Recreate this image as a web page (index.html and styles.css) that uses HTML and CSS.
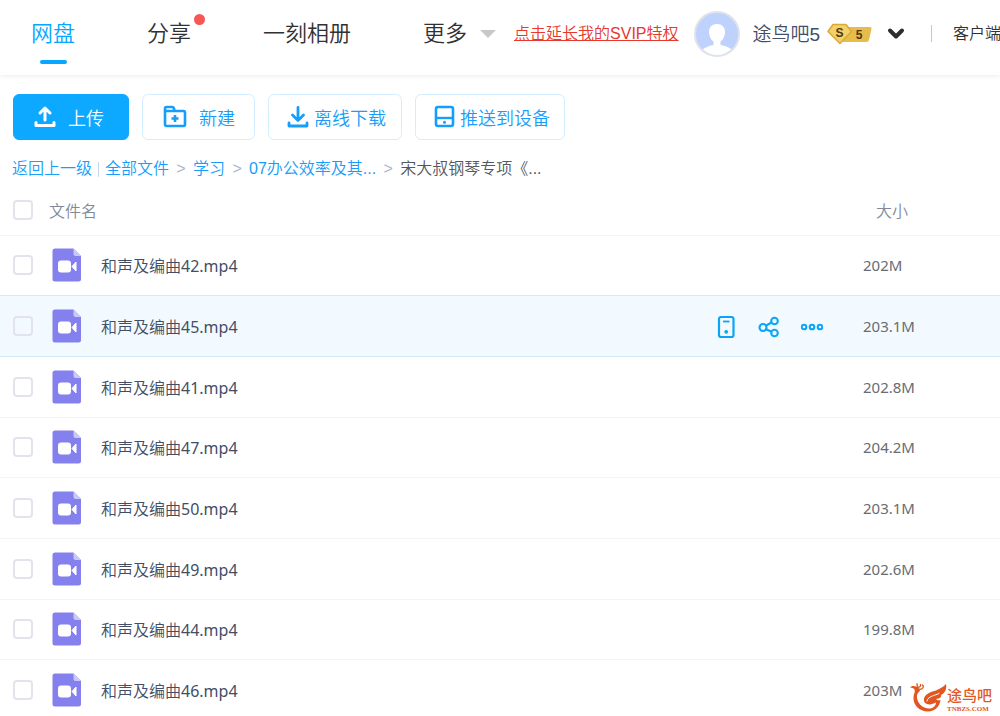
FILE: index.html
```html
<!DOCTYPE html>
<html lang="zh-CN">
<head>
<meta charset="utf-8">
<meta name="viewport" content="width=device-width, initial-scale=1">
<title>网盘</title>
<link rel="stylesheet" href="styles.css">
</head>
<body>
<svg class="defs" aria-hidden="true">
  <symbol id="video" viewBox="0 0 30 34">
    <path fill="#8480ee" d="M3 0.500H21.500L29 8V31a2.500 2.500 0 0 1-2.500 2.500H3A2.500 2.500 0 0 1 .5 31V3A2.500 2.500 0 0 1 3 .5Z"/>
    <path fill="#c9c8fa" d="M21.500.5L29 8H23.500a2 2 0 0 1-2-2Z"/>
    <rect x="6" y="12.500" width="13" height="12" rx="3" fill="#fff"/>
    <path fill="#fff" d="M20 18.500L24 14V23Z" stroke="#fff" stroke-linejoin="round"/>
  </symbol>
</svg>
<div class="app">
  <header class="topbar">
    <nav class="nav">
      <a class="nav-item active" href="#">网盘</a>
      <a class="nav-item share" href="#">分享<span class="dot"></span></a>
      <a class="nav-item album" href="#">一刻相册</a>
      <a class="nav-item more" href="#">更多<span class="caret"></span></a>
    </nav>
    <a class="svip" href="#">点击延长我的SVIP特权</a>
    <svg class="avatar" viewBox="0 0 46 46" role="img" aria-label="头像">
      <defs><clipPath id="face"><circle cx="23" cy="23" r="21"/></clipPath></defs>
      <circle cx="23" cy="23" r="22" fill="#bfd1fd" stroke="#dfe3e8" stroke-width="2"/>
      <g clip-path="url(#face)" fill="#fff">
        <path d="M15 21c0-5 3-8 8-8s8 3 8 8c0 4-2 8-4.500 9.500V34c8 1.500 12 4 13 8v5H7v-5c1-4 5-6.500 12.500-8v-3.500C17 29 15 25 15 21Z"/>
      </g>
    </svg>
    <span class="user">途鸟吧5</span>
    <svg class="badge" viewBox="0 0 45 22" role="img" aria-label="SVIP 5">
      <path fill="#e6bd4c" d="M18 4H43q2 0 1.500 2L42 17q-.5 2-2.500 2H16Z"/>
      <path fill="#f3d068" stroke="#dba93a" stroke-width="1.500" d="M6 1.500H19L24.500 8.500 13 20.500 1 8.500Z" stroke-linejoin="round"/>
      <text x="12.500" y="14" class="badge-text">S</text>
      <text x="32" y="16" class="badge-text">5</text>
    </svg>
    <button class="toggle" type="button" aria-label="账户菜单">
      <svg width="18" height="14" viewBox="0 0 18 14"><path d="M3 3.500L9 9.500 15 3.500" fill="none" stroke="#2b2d31" stroke-width="4" stroke-linecap="round" stroke-linejoin="round"/></svg>
    </button>
    <span class="divider"></span>
    <a class="client" href="#">客户端</a>
  </header>

  <main>
    <div class="toolbar">
      <button class="btn primary" type="button">
        <svg width="24" height="24" viewBox="0 0 24 24"><path d="M12 15V3.500M7 8L12 3 17 8M3 17.500V20.500H21V17.500" fill="none" stroke="currentColor" stroke-width="3" stroke-linejoin="round" stroke-linecap="round"/></svg>
        上传
      </button>
      <button class="btn create" type="button">
        <svg width="24" height="24" viewBox="0 0 24 24"><path d="M2 6V3.500Q2 2 3.500 2H9Q10.500 2 11 3.500L11.500 6H20.500Q22 6 22 7.500V19.500Q22 21 20.500 21H3.500Q2 21 2 19.500V6H11.500M12 10V17M8.500 13.500H15.500" fill="none" stroke="currentColor" stroke-width="2.600" stroke-linejoin="round"/></svg>
        新建
      </button>
      <button class="btn offline" type="button">
        <svg width="24" height="24" viewBox="0 0 24 24"><path d="M12 2.500V15M6.500 10L12 15.500 17.500 10M3 18V21H21V18" fill="none" stroke="currentColor" stroke-width="2.800" stroke-linejoin="round" stroke-linecap="round"/></svg>
        离线下载
      </button>
      <button class="btn push" type="button">
        <svg width="24" height="24" viewBox="0 0 24 24"><rect x="4" y="2" width="17" height="19" rx="2" fill="none" stroke="currentColor" stroke-width="2.600"/><path d="M4 13H21" stroke="currentColor" stroke-width="2.400"/><circle cx="12.500" cy="17.200" r="1.500" fill="currentColor"/></svg>
        推送到设备
      </button>
    </div>

    <nav class="crumbs" aria-label="路径">
      <a href="#">返回上一级</a><span class="bar"></span><a href="#">全部文件</a><span class="sep">&gt;</span><a href="#">学习</a><span class="sep">&gt;</span><a href="#">07办公效率及其...</a><span class="sep">&gt;</span><span class="here">宋大叔钢琴专项《...</span>
    </nav>

    <table class="files">
      <thead>
        <tr><th class="check"><input type="checkbox" aria-label="全选"></th><th class="name">文件名</th><th class="actions"></th><th class="size head-size">大小</th></tr>
      </thead>
      <tbody>
        <tr><td class="check"><input type="checkbox" id="f42"></td><td class="name"><label for="f42"><svg class="file"><use href="#video"/></svg><span>和声及编曲<span class="latin">42.mp4</span></span></label></td><td class="actions"></td><td class="size">202M</td></tr>
        <tr class="hovered"><td class="check"><input type="checkbox" id="f45"></td><td class="name"><label for="f45"><svg class="file"><use href="#video"/></svg><span>和声及编曲<span class="latin">45.mp4</span></span></label></td>
          <td class="actions"><div class="action-list">
            <button type="button" aria-label="推送到设备"><svg width="22" height="24" viewBox="0 0 22 24"><rect x="4" y="2" width="14.500" height="20" rx="2" fill="none" stroke="currentColor" stroke-width="2.200"/><path d="M8 6.500H14.500" stroke="currentColor" stroke-width="1.800"/><circle cx="11.200" cy="16.800" r="1.900" fill="currentColor"/></svg></button>
            <button type="button" aria-label="分享"><svg width="22" height="24" viewBox="0 0 22 24"><g fill="none" stroke="currentColor" stroke-width="2.100"><circle cx="5" cy="12.500" r="3.500"/><circle cx="16.500" cy="6" r="3.300"/><circle cx="16.500" cy="18" r="3.300"/><path d="M8 10.700L13.500 7.500M8 14.200L13.500 16.800"/></g></svg></button>
            <button type="button" aria-label="更多操作"><svg width="22" height="24" viewBox="0 0 22 24"><g fill="none" stroke="currentColor" stroke-width="2.100"><circle cx="3" cy="12" r="2.300"/><circle cx="11" cy="12" r="2.300"/><circle cx="19" cy="12" r="2.300"/></g></svg></button>
          </div></td><td class="size">203.1M</td></tr>
        <tr><td class="check"><input type="checkbox" id="f41"></td><td class="name"><label for="f41"><svg class="file"><use href="#video"/></svg><span>和声及编曲<span class="latin">41.mp4</span></span></label></td><td class="actions"></td><td class="size">202.8M</td></tr>
        <tr><td class="check"><input type="checkbox" id="f47"></td><td class="name"><label for="f47"><svg class="file"><use href="#video"/></svg><span>和声及编曲<span class="latin">47.mp4</span></span></label></td><td class="actions"></td><td class="size">204.2M</td></tr>
        <tr><td class="check"><input type="checkbox" id="f50"></td><td class="name"><label for="f50"><svg class="file"><use href="#video"/></svg><span>和声及编曲<span class="latin">50.mp4</span></span></label></td><td class="actions"></td><td class="size">203.1M</td></tr>
        <tr><td class="check"><input type="checkbox" id="f49"></td><td class="name"><label for="f49"><svg class="file"><use href="#video"/></svg><span>和声及编曲<span class="latin">49.mp4</span></span></label></td><td class="actions"></td><td class="size">202.6M</td></tr>
        <tr><td class="check"><input type="checkbox" id="f44"></td><td class="name"><label for="f44"><svg class="file"><use href="#video"/></svg><span>和声及编曲<span class="latin">44.mp4</span></span></label></td><td class="actions"></td><td class="size">199.8M</td></tr>
        <tr><td class="check"><input type="checkbox" id="f46"></td><td class="name"><label for="f46"><svg class="file"><use href="#video"/></svg><span>和声及编曲<span class="latin">46.mp4</span></span></label></td><td class="actions"></td><td class="size">203M</td></tr>
      </tbody>
    </table>
  </main>

  <div class="mark">
    <svg width="38" height="30" viewBox="0 0 38 30" aria-hidden="true">
      <path fill="#e2571f" d="M1 4.500C3 2.500 5 3 7 3.500C9 5 11 6 11 8C8 10 7.500 13 8.500 17C10 22 15 26 21 25.500C25 25 27 22 27 19.500C24 21 21 22 18 21C14 19.500 14 15 17 12C21 8 31 8 37 1C38 6 36 10 32 12C33 13 31 16 27 16C28 17.500 30 17.500 31.500 17C31 23 26 28.500 19 28.500C10 28.500 4 22 4.500 14C5 10 7 8 5 6C4 5 2.500 4.500 1 4.500Z"/>
      <path d="M8 4C9 2 7.500 1.500 8 .8M9 4.500C11 4 12 3 11.500 1.500M10 6C13 7 15.500 4 13.500 2" fill="none" stroke="#e2571f" stroke-width="1.300" stroke-linecap="round"/>
      <path d="M18 18C19 13 25 13 30 10.500" fill="none" stroke="#fff" stroke-width="1" stroke-linecap="round"/>
    </svg>
    <div class="mark-text"><span class="mark-name">途鸟吧</span><span class="mark-site">TNBZS.COM</span></div>
  </div>
</div>
</body>
</html>
```
FILE: styles.css
```css
* { box-sizing: border-box; }
body {
  margin: 0;
  background: #fff;
  font-family: "Liberation Sans", "Noto Sans CJK SC", sans-serif;
  font-size: 16px;
  font-weight: 350;
  color: #424e67;
}
a { color: inherit; text-decoration: none; }
button { font: inherit; cursor: pointer; }
svg { display: block; flex: none; }
.defs { position: absolute; width: 0; height: 0; }
.app { position: relative; height: 100vh; overflow: hidden; }

.topbar {
  display: flex;
  align-items: center;
  height: 75px;
  padding: 0 0 8px 31px;
  white-space: nowrap;
  box-shadow: 0 1px 5px rgba(0, 0, 0, .08);
}
.topbar > * { flex: none; }
.nav { display: flex; gap: 72px; margin-right: 18px; font-size: 22px; line-height: 32px; color: #303133; }
.nav-item { position: relative; }
.nav-item.active { color: #06a7ff; }
.nav-item.active::after {
  content: "";
  position: absolute;
  left: 50%;
  top: 42px;
  width: 27px;
  height: 4px;
  margin-left: -13px;
  border-radius: 2px;
  background: #06a7ff;
}
.dot {
  position: absolute;
  top: -4px;
  right: -14px;
  width: 11px;
  height: 11px;
  border-radius: 50%;
  background: #fa5555;
}
.more { display: flex; align-items: center; gap: 13px; }
.caret { border: 8px solid transparent; border-top-color: #c8c8c8; border-bottom: 0; }
.svip { margin-right: 15px; line-height: 24px; color: #e6382c; text-decoration: underline; }
.avatar { width: 46px; height: 46px; margin-right: 13px; }
.user { margin-right: 7px; padding-bottom: 2px; font-size: 19px; }
.badge { width: 45px; height: 22px; margin-right: 15px; }
.badge-text { font: bold 12px "Liberation Sans", sans-serif; fill: #4e3710; text-anchor: middle; }
.toggle { padding: 0; border: 0; background: none; }
.divider { width: 1px; height: 17px; margin: 0 21px 0 26px; background: #c5c8ce; }
.client { line-height: 24px; color: #303133; }

.toolbar { display: flex; gap: 13px; padding: 19px 12px 0 13px; }
.btn {
  display: flex;
  align-items: center;
  height: 46px;
  border: 1px solid #d3eefe;
  border-radius: 6px;
  background: #fff;
  color: #179dfa;
  font-size: 18px;
  white-space: nowrap;
}
.btn.primary { gap: 11px; padding: 0 24px 0 19px; border-color: #0da8ff; background: #0da8ff; color: #fff; }
.btn.create { gap: 12px; padding: 0 19px 0 20px; }
.btn.offline { gap: 4px; padding: 0 15px 0 17px; }
.btn.push { gap: 4px; padding: 0 14px 0 16px; }

.crumbs { display: flex; align-items: center; padding: 17px 12px 0; line-height: 24px; white-space: nowrap; color: #179dfa; }
.bar { width: 1px; height: 15px; margin: 0 6px; background: #c4d9f0; }
.sep { width: 24px; text-align: center; color: #a9b5cd; }
.here { color: #55585e; }

.files { width: 100%; border-collapse: collapse; table-layout: fixed; }
.files th { height: 54px; padding: 5px 0 0; font-weight: 350; text-align: left; color: #818999; }
.files td { height: 61px; padding: 0; border-top: 1px solid #f2f4f8; }
.files tbody tr:nth-child(3n+1) td { height: 60px; }
.files .check { width: 49px; padding-left: 13px; }
.files .actions { width: 148px; }
.files .size { width: 137px; font-family: "Noto Sans", sans-serif; font-size: 15px; font-weight: 400; color: #686c73; }
.files .head-size { padding-left: 13px; font-family: "Noto Sans CJK SC", sans-serif; font-size: 16px; font-weight: 350; color: #818999; }
.files input {
  display: block;
  appearance: none;
  width: 20px;
  height: 20px;
  margin: 0;
  border: 2px solid #e2e3ee;
  border-radius: 4px;
  background: #fff;
}
.files label { display: flex; align-items: center; gap: 19px; padding-left: 3px; font-family: "Noto Sans", "Noto Sans CJK SC", sans-serif; white-space: nowrap; }
.latin { font-weight: 400; }
.file { width: 30px; height: 34px; }
.hovered { background: #f2faff; }
.hovered td { border-top-color: #d3ebfb; border-bottom: 1px solid #d3ebfb; }
.hovered input { background: transparent; }
.action-list { display: flex; gap: 21px; padding-top: 3px; }
.action-list button { padding: 0; border: 0; background: none; color: #0ba5f7; }

.mark { position: absolute; right: 8px; bottom: 3px; display: flex; align-items: center; color: #e2571f; }
.mark-text { display: flex; flex-direction: column; gap: 2px; padding-top: 4px; }
.mark-name { font: 500 15px/17px "Noto Sans CJK SC", sans-serif; }
.mark-site { font: bold 7px/8px "Liberation Serif", serif; }
```
